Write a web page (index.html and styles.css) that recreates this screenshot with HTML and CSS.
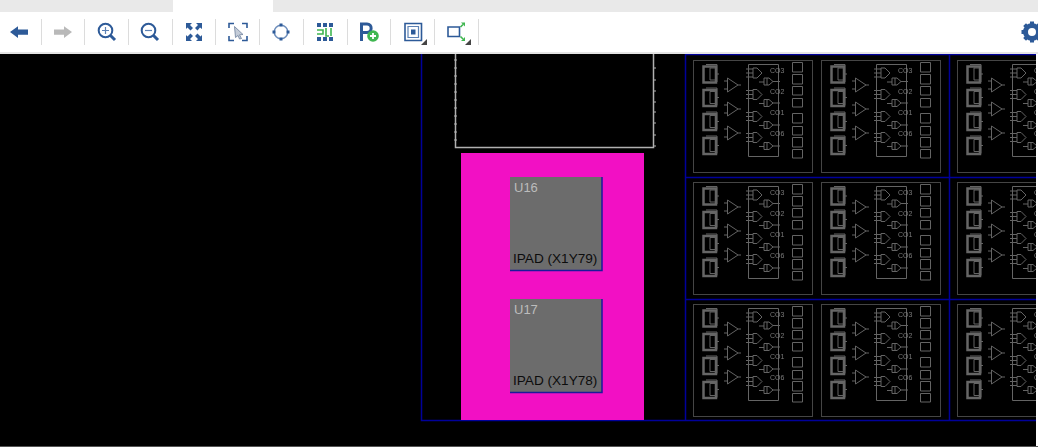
FILE: index.html
```html
<!DOCTYPE html>
<html lang="en">
<head>
    <meta charset="UTF-8">
    <title>Device</title>
    <link rel="stylesheet" href="styles.css">
</head>
<body>
    <div class="tabstrip">
        <div class="tab-rest tab-left"></div>
        <div class="tab-active"></div>
        <div class="tab-rest"></div>
    </div>

    <div class="toolbar">
        <div class="tool">
            <svg class="icon" viewBox="0 0 24 24"><path class="fill-blue" d="M3 12 11 6.200V9.600H21V14.800H11V18Z"/></svg>
        </div>
        <div class="tool">
            <svg class="icon" viewBox="0 0 24 24"><path class="fill-grey" d="M21 12 13 6.200V9.600H3V14.800H13V18Z"/></svg>
        </div>
        <div class="tool">
            <svg class="icon" viewBox="0 0 24 24">
                <circle class="line-blue" cx="10.500" cy="10.500" r="6.800"/>
                <path class="line-blue thick" d="M15.500 15.500 20 20"/>
                <path class="line-thin" d="M10.500 7V14M7 10.500H14"/>
            </svg>
        </div>
        <div class="tool">
            <svg class="icon" viewBox="0 0 24 24">
                <circle class="line-blue" cx="10.500" cy="10.500" r="6.800"/>
                <path class="line-blue thick" d="M15.500 15.500 20 20"/>
                <path class="line-thin" d="M7 10.500H14"/>
            </svg>
        </div>
        <div class="tool">
            <svg class="icon" viewBox="0 0 24 24">
                <path class="fill-blue" d="M4 3H10L8 5 11 8 8.500 10.500 5.500 7.500 4 9ZM20 3V9L18 7.500 15.500 10.500 13 8 16 5 14 3ZM4 21V15L5.500 16.500 8.500 13.500 11 16 8 19 10 21ZM20 21H14L16 19 13 16 15.500 13.500 18.500 16.500 20 15Z"/>
            </svg>
        </div>
        <div class="tool">
            <svg class="icon" viewBox="0 0 24 24">
                <path class="line-blue mid" d="M3 8V3.500H8M16 3.500H21V8M3 16V20.500H8M16 20.500H21V16"/>
                <path class="cursor" d="M8.500 6.500 17 14.500 13.500 14.800 15.500 18.500 13.500 19 12 15.500 9.500 17.500Z"/>
            </svg>
        </div>
        <div class="tool">
            <svg class="icon" viewBox="0 0 24 24">
                <circle class="line-soft" cx="12" cy="12" r="6.800"/>
                <path class="line-blue thick" d="M12 3.500V6.500M12 17.500V20.500M3.500 12H6.500M17.500 12H20.500"/>
            </svg>
        </div>
        <div class="tool">
            <svg class="icon" viewBox="0 0 24 24">
                <path class="fill-blue" d="M4 3H8V7H4ZM10 3H14V7H10ZM16 3H20V7H16ZM4 17H8V21H4ZM10 17H14V21H10ZM16 17H20V21H16Z"/>
                <path class="line-green" d="M4 10H10V14H4M13 8V16H16M18 8V16"/>
            </svg>
        </div>
        <div class="tool">
            <svg class="icon" viewBox="0 0 24 24">
                <path class="line-blue thick" d="M4.500 21V4H10C15.500 4 15.500 12.500 10 12.500H4.500"/>
                <circle class="dot-green" cx="16" cy="16" r="5.800"/>
                <path class="line-white" d="M16 13V19M13 16H19"/>
            </svg>
        </div>
        <div class="tool">
            <svg class="icon" viewBox="0 0 24 24">
                <path class="line-blue mid" d="M4 3.500H20.500V20.500H4Z"/>
                <path class="line-thin" d="M7 6.500H17.500V17.500H7Z"/>
                <path class="fill-blue" d="M10 9.500H14.500V14.500H10Z"/>
            </svg>
            <span class="corner"></span>
        </div>
        <div class="tool">
            <svg class="icon" viewBox="0 0 24 24">
                <path class="line-blue mid" d="M4 7H15.500V16.500H4Z"/>
                <path class="line-green" d="M16.500 7 19 4.500M16.500 16.500 19 19"/>
                <path class="fill-green" d="M17 2.500H21V6.500ZM17 21H21V17Z"/>
            </svg>
            <span class="corner"></span>
        </div>
        <div class="gear">
            <svg class="icon" viewBox="0 0 24 24">
                <path class="line-blue gear-tooth" d="M12 1.500V22.500M1.500 12H22.500M4.600 4.600 19.400 19.400M19.400 4.600 4.600 19.400"/>
                <circle class="gear-ring" cx="12" cy="12" r="6.500"/>
            </svg>
        </div>
    </div>

    <div class="canvas">
        <svg class="device" viewBox="0 54 1036 392">
            <defs>
                <g id="slice">
                    <rect class="tile-box" x="0.500" y="0.500" width="119" height="112"/>
                    <g id="reg">
                        <path class="tile-thick" d="M10.500 6.500H23V22.500H10.500Z"/>
                        <path class="tile-line" d="M13 4.500H24V22M17 8H23V20H17ZM23 14H26"/>
                    </g>
                    <use href="#reg" y="23.500"/>
                    <use href="#reg" y="47.500"/>
                    <use href="#reg" y="71.500"/>
                    <path class="tile-line" d="M34.500 18V32L45 25ZM34.500 42V56L45 49ZM34.500 66V80L45 73ZM45 25H48M45 49H48M45 73H48M31 21H34M31 29H34M31 45H34M31 53H34M31 69H34M31 77H34"/>
                    <path class="tile-line" d="M55.500 4.500H85.500V96.500H55.500Z"/>
                    <g id="lut">
                        <path class="tile-line" d="M53 9H60M53 13H60M53 17H60M60 8H64L69 13 64 18H60Z"/>
                        <path class="tile-line" d="M66 22H71M71 18H76L80 21.500 76 25H71ZM80 21.500H87M74 18V25"/>
                    </g>
                    <use href="#lut" y="21.500"/>
                    <use href="#lut" y="43.500"/>
                    <use href="#lut" y="64.500"/>
                    <text class="tile-text" x="77" y="13">CO3</text>
                    <text class="tile-text" x="77" y="34">CO2</text>
                    <text class="tile-text" x="77" y="55">CO1</text>
                    <text class="tile-text" x="77" y="76">CO6</text>
                    <path class="tile-line" d="M99.500 2.500H109.500V12H99.500ZM99.500 14.500H109.500V24H99.500ZM99.500 26.500H109.500V35H99.500ZM99.500 38.500H109.500V47H99.500ZM99.500 53.500H109.500V63H99.500ZM99.500 66.500H109.500V75H99.500ZM99.500 77.500H109.500V87H99.500ZM99.500 89.500H109.500V98H99.500Z"/>
                </g>
                <g id="slice-row">
                    <use href="#slice" x="693"/>
                    <use href="#slice" x="821"/>
                    <use href="#slice" x="957"/>
                </g>
                <g id="pad">
                    <rect class="pad" x="510" y="177" width="92" height="93"/>
                    <path class="net" d="M602 177V270.500H510"/>
                </g>
            </defs>

            <g class="grid-lines">
                <path d="M421.500 54V420.500H1036M685.500 54V420.500M949.500 54V420.500M685 54.500H1036M685 177.500H1036M685 299.500H1036"/>
            </g>

            <path class="bank" d="M455.500 54V147.500H653.500V54"/>
            <path class="bank-ticks" d="M454 60H457M454 68H457M454 76H457M454 84H457M454 92H457M454 100H457M454 108H457M454 116H457M454 124H457M454 132H457M454 140H457M653 68H656M653 80H656M653 91H656M653 102H656M653 112H656M653 123H656M653 135H656M653 146H656"/>

            <rect class="io-bank" x="461" y="153" width="183" height="267"/>
            <use href="#pad"/>
            <use href="#pad" y="122"/>
            <text class="pad-name" x="514" y="192">U16</text>
            <text class="pad-site" x="513" y="263">IPAD (X1Y79)</text>
            <text class="pad-name" x="514" y="314">U17</text>
            <text class="pad-site" x="513" y="385">IPAD (X1Y78)</text>

            <g class="tiles">
                <use href="#slice-row" y="60"/>
                <use href="#slice-row" y="182"/>
                <use href="#slice-row" y="304"/>
            </g>
        </svg>
    </div>
</body>
</html>
```

FILE: styles.css
```css
html, body {
    margin: 0;
    height: 100%;
    overflow: hidden;
}
body {
    display: flex;
    flex-direction: column;
    background: white;
    font-family: "Liberation Sans", Arial, sans-serif;
}

.tabstrip {
    display: flex;
    height: 12px;
}
.tab-rest {
    flex: 1;
    background-color: #e9e9e9;
}
.tab-left {
    flex: 0 0 173px;
}
.tab-active {
    flex: 0 0 100px;
    background-color: white;
}

.toolbar {
    display: flex;
    align-items: center;
    height: 40px;
    border-bottom: 2px solid #e4e4e4;
    overflow: hidden;
}
.tool {
    position: relative;
    box-sizing: border-box;
    flex: none;
    display: flex;
    align-items: center;
    justify-content: center;
    width: 43.7px;
    height: 26px;
    border-right: 1px solid #dcdcdc;
}
.tool:first-child {
    margin-left: -2px;
}
.gear {
    margin-left: auto;
    margin-right: -6px;
    display: flex;
}
.icon {
    width: 24px;
    height: 24px;
    filter: blur(0.3px);
}
.corner {
    position: absolute;
    right: 7px;
    bottom: 0;
    border-style: solid;
    border-width: 0 0 6px 6px;
    border-color: transparent transparent #444 transparent;
}

.fill-blue { fill: #2d5a98; }
.fill-grey { fill: #b9b9b9; }
.fill-green { fill: #3fb650; }
.line-blue { fill: none; stroke: #2d5a98; stroke-width: 2; }
.line-blue.mid { stroke-width: 1.6; }
.line-blue.thick { stroke-width: 3; }
.line-thin { fill: none; stroke: #5d82b5; stroke-width: 1.2; }
.line-soft { fill: none; stroke: #6f8fbc; stroke-width: 1.5; }
.line-green { fill: none; stroke: #3fb650; stroke-width: 1.6; }
.line-white { fill: none; stroke: white; stroke-width: 1.8; }
.dot-green { fill: #3fb650; }
.cursor { fill: #c4ccd8; stroke: #6c7f9c; stroke-width: 0.8; }
.gear-tooth { stroke-width: 4; }
.gear-ring { fill: white; stroke: #2d5a98; stroke-width: 5; }

.canvas {
    flex: 1;
    display: flex;
    min-height: 0;
    padding-right: 2px;
    border-bottom: 1px solid #555;
}
.device {
    display: block;
    width: 1036px;
    height: 392px;
    background: black;
}

.grid-lines path {
    fill: none;
    stroke: #00009a;
    stroke-width: 1.500;
}
.bank {
    fill: none;
    stroke: #b0b0b0;
    stroke-width: 1.500;
}
.bank-ticks {
    fill: none;
    stroke: #b0b0b0;
    stroke-width: 1;
}
.io-bank {
    fill: #f210c4;
}
.pad {
    fill: #6c6c6c;
}
.net {
    fill: none;
    stroke: #1a1a9a;
    stroke-width: 1.500;
}
.pad-name {
    font-size: 13px;
    fill: #bcbcbc;
}
.pad-site {
    font-size: 13.6px;
    fill: #0c0c0c;
}

.tiles {
    filter: blur(0.35px);
}
.tile-box {
    fill: none;
    stroke: #454545;
}
.tile-line {
    fill: none;
    stroke: #646464;
    stroke-width: 1;
}
.tile-thick {
    fill: none;
    stroke: #666;
    stroke-width: 2.500;
}
.tile-text {
    font-size: 7px;
    fill: #7a7a7a;
}
```
